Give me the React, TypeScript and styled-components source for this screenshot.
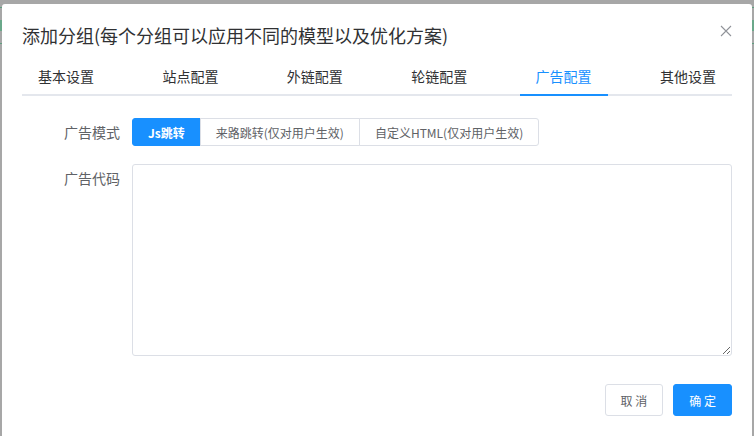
import { useState } from 'react'
import styled, { createGlobalStyle } from 'styled-components'

const GlobalStyle = createGlobalStyle`
  html, body {
    margin: 0;
    padding: 0;
    height: 100%;
    overflow: hidden;
  }
  body {
    background:
      linear-gradient(#5f9e80, #5f9e80) 0 7px / 100% 1px no-repeat,
      linear-gradient(#6aa88a, #6aa88a) 0 20px / 100% 11px no-repeat,
      linear-gradient(#5f9e80, #5f9e80) 0 43px / 100% 1px no-repeat,
      #a7a7a7;
    font-family: "Noto Sans CJK SC", "Noto Sans", sans-serif;
  }
`

const Dialog = styled.div`
  margin: 4px 0 0 2px;
  width: 750px;
  height: 440px;
  background: #fff;
  border-radius: 3px 3px 0 0;
  box-sizing: border-box;
  padding: 0 20px 0 20px;
`

const Header = styled.div`
  display: flex;
  align-items: center;
  justify-content: space-between;
  height: 54px;
  padding-top: 4px;
`

const Title = styled.h2`
  margin: 0;
  font-size: 18px;
  font-weight: 400;
  color: #303133;
`

const CloseButton = styled.button`
  border: none;
  background: none;
  padding: 0;
  margin-right: -1px;
  margin-top: -8px;
  width: 14px;
  height: 14px;
  cursor: pointer;
  display: flex;
`

const Tabs = styled.div`
  display: flex;
  justify-content: space-between;
  border-bottom: 2px solid #e4e7ed;
`

const Tab = styled.div<{ $active?: boolean }>`
  padding: 0 16px;
  height: 32px;
  line-height: 28px;
  font-size: 14px;
  color: ${(p) => (p.$active ? '#1890ff' : '#303133')};
  margin-bottom: -2px;
  border-bottom: 2px solid ${(p) => (p.$active ? '#1890ff' : 'transparent')};
  cursor: pointer;
`

const Form = styled.div`
  padding-top: 22px;
  display: flex;
  flex-direction: column;
  gap: 18px;
`

const Row = styled.div`
  display: flex;
  align-items: flex-start;
`

const Label = styled.label`
  width: 98px;
  padding-right: 12px;
  text-align: right;
  font-size: 14px;
  color: #606266;
  line-height: 28px;
  flex-shrink: 0;
  box-sizing: content-box;
`

const RadioGroup = styled.div`
  display: flex;
`

const RadioButton = styled.button<{ $active?: boolean }>`
  height: 28px;
  padding: 0 15px;
  font-family: inherit;
  font-size: 12px;
  font-weight: ${(p) => (p.$active ? 700 : 400)};
  color: ${(p) => (p.$active ? '#fff' : '#606266')};
  background: ${(p) => (p.$active ? '#1890ff' : '#fff')};
  border: 1px solid ${(p) => (p.$active ? '#1890ff' : '#dcdfe6')};
  margin-left: -1px;
  cursor: pointer;
  &:first-child {
    margin-left: 0;
    border-radius: 3px 0 0 3px;
  }
  &:last-child {
    border-radius: 0 3px 3px 0;
  }
`

const CodeInput = styled.textarea`
  width: 600px;
  height: 192px;
  box-sizing: border-box;
  border: 1px solid #dcdfe6;
  border-radius: 3px;
  padding: 5px 12px;
  font-family: inherit;
  font-size: 14px;
  color: #606266;
  resize: vertical;
  &:focus {
    outline: none;
    border-color: #1890ff;
  }
`

const Footer = styled.div`
  display: flex;
  justify-content: flex-end;
  gap: 10px;
  padding-top: 28px;
`

const Button = styled.button<{ $primary?: boolean }>`
  height: 32px;
  padding: 0 15px;
  font-family: inherit;
  font-size: 12px;
  border-radius: 3px;
  border: 1px solid ${(p) => (p.$primary ? '#1890ff' : '#dcdfe6')};
  background: ${(p) => (p.$primary ? '#1890ff' : '#fff')};
  color: ${(p) => (p.$primary ? '#fff' : '#606266')};
  cursor: pointer;
`

const tabs = ['基本设置', '站点配置', '外链配置', '轮链配置', '广告配置', '其他设置']
const modes = ['Js跳转', '来路跳转(仅对用户生效)', '自定义HTML(仅对用户生效)']

const App = () => {
  const [tab, setTab] = useState(4)
  const [mode, setMode] = useState(0)
  const [code, setCode] = useState('')

  return (
    <>
      <GlobalStyle />
      <Dialog>
        <Header>
          <Title>添加分组(每个分组可以应用不同的模型以及优化方案)</Title>
          <CloseButton aria-label="关闭">
            <svg width="14" height="14" viewBox="0 0 14 14">
              <path d="M2 2 L12 12 M12 2 L2 12" stroke="#909399" strokeWidth="1.1" />
            </svg>
          </CloseButton>
        </Header>

        <Tabs>
          {tabs.map((name, i) => (
            <Tab key={name} $active={i === tab} onClick={() => setTab(i)}>
              {name}
            </Tab>
          ))}
        </Tabs>

        <Form>
          <Row>
            <Label>广告模式</Label>
            <RadioGroup>
              {modes.map((m, i) => (
                <RadioButton key={m} $active={i === mode} onClick={() => setMode(i)}>
                  {m}
                </RadioButton>
              ))}
            </RadioGroup>
          </Row>
          <Row>
            <Label>广告代码</Label>
            <CodeInput value={code} onChange={(e) => setCode(e.target.value)} />
          </Row>
        </Form>

        <Footer>
          <Button>取 消</Button>
          <Button $primary>确 定</Button>
        </Footer>
      </Dialog>
    </>
  )
}

export default App
